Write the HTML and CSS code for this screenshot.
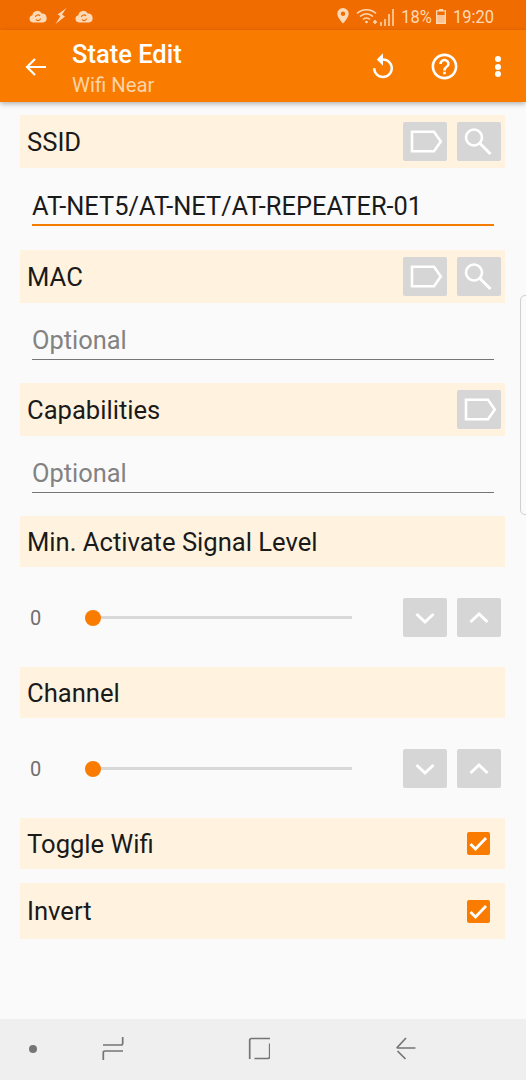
FILE: index.html
```html
<!DOCTYPE html>
<html lang="en">
<head>
<meta charset="utf-8">
<title>State Edit</title>
<link rel="stylesheet" href="styles.css">
</head>
<body>
<svg class="defs" width="0" height="0" aria-hidden="true">
  <symbol id="tag" viewBox="0 0 44 39"><path d="M9 9.800H31L37.800 19.500L31 29.200H9Z" fill="none" stroke="#fff" stroke-width="2.600"/></symbol>
  <symbol id="search" viewBox="0 0 44 39"><circle cx="17" cy="15.500" r="8" fill="none" stroke="#fff" stroke-width="2.600"/><path d="M23 21.500L33.500 32" fill="none" stroke="#fff" stroke-width="3"/></symbol>
  <symbol id="down" viewBox="0 0 44 39"><path d="M13.500 16L22 24L30.500 16" fill="none" stroke="#fff" stroke-width="3"/></symbol>
  <symbol id="up" viewBox="0 0 44 39"><path d="M13.500 24L22 16L30.500 24" fill="none" stroke="#fff" stroke-width="3"/></symbol>
  <symbol id="check" viewBox="0 0 23 23"><path d="M3.500 12L8.500 17L19 6" fill="none" stroke="#fff" stroke-width="2.800"/></symbol>
  <symbol id="cloud" viewBox="0 0 18 14"><path d="M4 13.500a3.700 3.700 0 0 1-.6-7.300A5 5 0 0 1 12.800 4.600 4.500 4.500 0 0 1 14 13.500Z" fill="#fdd9b5"/><path d="M6.500 8a2.500 2.500 0 0 1 4.500-1M11.500 9.500a2.500 2.500 0 0 1-4.500 1" fill="none" stroke="#f06c00" stroke-width="1.200"/></symbol>
</svg>

<header class="status">
  <div class="status-left">
    <svg class="st-cloud"><use href="#cloud"/></svg>
    <svg class="st-bolt" viewBox="0 0 12 16"><path d="M11.500 0L2.500 6.500L5.500 8L0.500 16L10 8.500L7 6.500Z" fill="#fdd9b5"/></svg>
    <svg class="st-cloud"><use href="#cloud"/></svg>
  </div>
  <div class="status-right">
    <svg class="st-pin" viewBox="0 0 12 16"><path fill-rule="evenodd" d="M6 0a5.700 5.700 0 0 1 5.700 5.700C11.700 9.500 6 15.500 6 15.500S.3 9.500.3 5.700A5.700 5.700 0 0 1 6 0ZM6 3.500a2.200 2.200 0 1 0 0 4.400a2.200 2.200 0 0 0 0-4.400Z" fill="#fdd9b5"/></svg>
    <svg class="st-wifi" viewBox="0 0 38 18"><g fill="none" stroke="#fdd9b5" stroke-width="1.500"><path d="M1 5.500C6 .5 15 .5 20 5.500"/><path d="M4 8.500C8 5 13 5 17 8.500"/><path d="M7 11.500C9 9.500 12 9.500 14 11.500"/><path d="M17 14H21M19 12V16"/></g><circle cx="10.500" cy="14" r="1.300" fill="#fdd9b5"/><path d="M25 14V18M29 11V18M33 6V18M37 1V18" fill="none" stroke="#fdd9b5" stroke-width="1.500"/></svg>
    <span class="st-text">18%</span>
    <svg class="st-batt" viewBox="0 0 10 15"><path fill-rule="evenodd" d="M3 0H7V1.200H10V15H0V1.200H3ZM1.300 2.500V13.700H8.700V2.500Z" fill="#fdd9b5"/><rect x="1" y="6" width="8" height="8" fill="#fdd9b5" opacity=".8"/></svg>
    <span class="st-text st-time">19:20</span>
  </div>
</header>

<header class="appbar">
  <svg class="back" viewBox="0 0 22 18"><path d="M21 9H2M10 1L2 9L10 17" fill="none" stroke="#fff" stroke-width="2.200"/></svg>
  <div class="titles">
    <div class="title">State Edit</div>
    <div class="subtitle">Wifi Near</div>
  </div>
  <svg class="act act-undo" viewBox="0 0 24 24"><path d="M12 5V1L7 6l5 5V7c3.310 0 6 2.690 6 6s-2.690 6-6 6-6-2.690-6-6H4c0 4.420 3.580 8 8 8s8-3.580 8-8-3.580-8-8-8z" fill="#fff"/></svg>
  <svg class="act act-help" viewBox="0 0 24 24"><path d="M11 18h2v-2h-2v2zm1-16C6.480 2 2 6.480 2 12s4.480 10 10 10 10-4.480 10-10S17.520 2 12 2zm0 18c-4.410 0-8-3.590-8-8s3.590-8 8-8 8 3.590 8 8-3.590 8-8 8zm0-14c-2.210 0-4 1.790-4 4h2c0-1.100.9-2 2-2s2 .9 2 2c0 2-3 1.750-3 5h2c0-2.250 3-2.500 3-5 0-2.210-1.790-4-4-4z" fill="#fff"/></svg>
  <div class="act-more"><i></i><i></i><i></i></div>
</header>

<main class="form">
  <div class="row row-first"><span>SSID</span><div class="btns"><button class="btn"><svg><use href="#tag"/></svg></button><button class="btn"><svg><use href="#search"/></svg></button></div></div>
  <div class="field"><div class="input input-active">AT-NET5/AT-NET/AT-REPEATER-01</div></div>
  <div class="row"><span>MAC</span><div class="btns"><button class="btn"><svg><use href="#tag"/></svg></button><button class="btn"><svg><use href="#search"/></svg></button></div></div>
  <div class="field field-s"><div class="input input-hint">Optional</div></div>
  <div class="row"><span>Capabilities</span><div class="btns"><button class="btn"><svg><use href="#tag"/></svg></button></div></div>
  <div class="field field-s"><div class="input input-hint">Optional</div></div>
  <div class="row row-s"><span>Min. Activate Signal Level</span></div>
  <div class="slider-row">
    <span class="val">0</span>
    <div class="slider"><i class="thumb"></i></div>
    <div class="btns"><button class="btn"><svg><use href="#down"/></svg></button><button class="btn"><svg><use href="#up"/></svg></button></div>
  </div>
  <div class="row row-s"><span>Channel</span></div>
  <div class="slider-row">
    <span class="val">0</span>
    <div class="slider"><i class="thumb"></i></div>
    <div class="btns"><button class="btn"><svg><use href="#down"/></svg></button><button class="btn"><svg><use href="#up"/></svg></button></div>
  </div>
  <div class="row row-s"><span>Toggle Wifi</span><svg class="check"><use href="#check"/></svg></div>
  <div class="row row-l"><span>Invert</span><svg class="check"><use href="#check"/></svg></div>
</main>

<div class="edge-handle"></div>

<footer class="nav">
  <i class="nav-dot"></i>
  <svg class="nav-ico nav-recent" viewBox="0 0 22 24"><path d="M1 9H19C20.200 9 20.700 8.500 20.700 7.300V1M21 15H3C1.800 15 1.300 15.500 1.300 16.700V24" fill="none" stroke="#757575" stroke-width="1.700"/></svg>
  <svg class="nav-ico nav-home" viewBox="0 0 22 24"><path d="M22 2.500H3.500C2.300 2.500 1.700 3.300 1.700 4.500V23M6.500 22.500H20C21.300 22.500 21.700 21.700 21.700 20.500V7.500" fill="none" stroke="#757575" stroke-width="1.700"/></svg>
  <svg class="nav-ico nav-back" viewBox="0 0 22 24"><path d="M19.500 12H0.700M10 2L0.700 12M1.500 15L9.500 23" fill="none" stroke="#757575" stroke-width="1.700"/></svg>
</footer>
</body>
</html>
```

FILE: styles.css
```css
* { box-sizing: border-box; }
html, body { margin: 0; padding: 0; }
body {
  position: relative;
  width: 526px;
  height: 1080px;
  overflow: hidden;
  display: flex;
  flex-direction: column;
  background: #fafafa;
  font-family: Roboto, "Noto Sans", sans-serif;
  color: #1a1a1a;
}
.defs { position: absolute; }

.status {
  height: 30px;
  flex: none;
  background: #f06c00;
  display: flex;
  align-items: center;
  justify-content: space-between;
  padding: 3px 32px 0 29px;
}
.status-left, .status-right { display: flex; align-items: center; }
.status-left { margin-top: -1px; }
.st-cloud { width: 18px; height: 14px; }
.st-bolt { width: 12px; height: 16px; margin: 0 8px 0 8px; }
.st-pin { width: 12px; height: 16px; margin: -2px 7px 0 0; }
.st-wifi { width: 38px; height: 18px; margin-right: 7px; }
.st-text {
  display: inline-block;
  font-size: 16.500px;
  line-height: 20px;
  color: #fdd9b5;
  transform: scaleY(1.12);
}
.st-batt { width: 10px; height: 15px; margin: 0 7px 0 4px; }

.appbar {
  height: 72px;
  flex: none;
  background: #f97c00;
  box-shadow: 0 2px 5px rgba(0,0,0,.28);
  position: relative;
  z-index: 2;
  display: flex;
  align-items: center;
  color: #fff;
  padding-left: 25px;
}
.back { width: 22px; height: 18px; margin-top: 2px; }
.titles { margin: 4px 0 0 25px; flex: 1; }
.title { font-size: 25.500px; font-weight: 500; line-height: 30px; margin-top: -1px; }
.subtitle { font-size: 20.300px; line-height: 24px; margin-top: 4px; color: #fdd3a8; }
.act { flex: none; }
.act-undo { width: 30px; height: 30px; margin-right: 31px; margin-top: 2px; }
.act-help { width: 31px; height: 31px; margin-right: 35px; margin-top: 1px; }
.act-more { width: 6px; margin-right: 25px; display: flex; flex-direction: column; gap: 1.500px; margin-top: 1px; }
.act-more i { display: block; width: 6px; height: 6px; border-radius: 50%; background: #fff; }

.form {
  flex: 1;
  padding: 13px 21px 0 20px;
  display: flex;
  flex-direction: column;
}
.row {
  height: 53px;
  flex: none;
  background: #fff3e0;
  display: flex;
  align-items: center;
  justify-content: space-between;
  padding: 0 4px 0 7px;
  font-size: 25.600px;
}
.row-s { height: 51px; }
.row-l { height: 56px; margin-top: 14px; }
.btns { display: flex; gap: 10px; }
.btn {
  width: 44px;
  height: 39px;
  padding: 0;
  border: 0;
  border-radius: 2px;
  background: #d6d6d6;
  display: block;
}
.btn svg { display: block; width: 44px; height: 39px; }

.field { height: 82px; padding: 10px 11px 0 12px; flex: none; }
.field-s { height: 80px; }
.input {
  height: 47px;
  font-size: 25.400px;
  line-height: 32px;
  padding-top: 11px;
  border-bottom: 1px solid #757575;
}
.input-active { height: 48px; padding-top: 12px; border-bottom: 2px solid #f57c00; color: #1a1a1a; }
.input-hint { color: #828282; }

.slider-row {
  height: 100px;
  flex: none;
  display: flex;
  align-items: center;
  padding-right: 4px;
}
.val { width: 65px; padding: 2px 0 0 10px; font-size: 20px; color: #6f6f6f; }
.slider {
  width: 267px;
  height: 3px;
  background: #d8d8d8;
  margin-right: 51px;
  position: relative;
}
.thumb {
  position: absolute;
  left: 0;
  top: -6px;
  width: 16px;
  height: 16px;
  border-radius: 50%;
  background: #f97c00;
}
.check {
  width: 23px;
  height: 23px;
  margin-right: 11px;
  border-radius: 2px;
  background: #f97c00;
}

.edge-handle {
  position: absolute;
  left: 520px;
  top: 295px;
  width: 10px;
  height: 220px;
  border: 1px solid #cfcfcf;
  border-radius: 6px;
}

.nav {
  height: 61px;
  flex: none;
  background: #efefef;
  position: relative;
}
.nav-dot {
  position: absolute;
  left: 29px;
  top: 26px;
  width: 8px;
  height: 8px;
  border-radius: 50%;
  background: #757575;
}
.nav-ico { position: absolute; width: 22px; height: 24px; top: 17px; }
.nav-recent { left: 102px; }
.nav-home { left: 248px; }
.nav-back { left: 396px; }
```
